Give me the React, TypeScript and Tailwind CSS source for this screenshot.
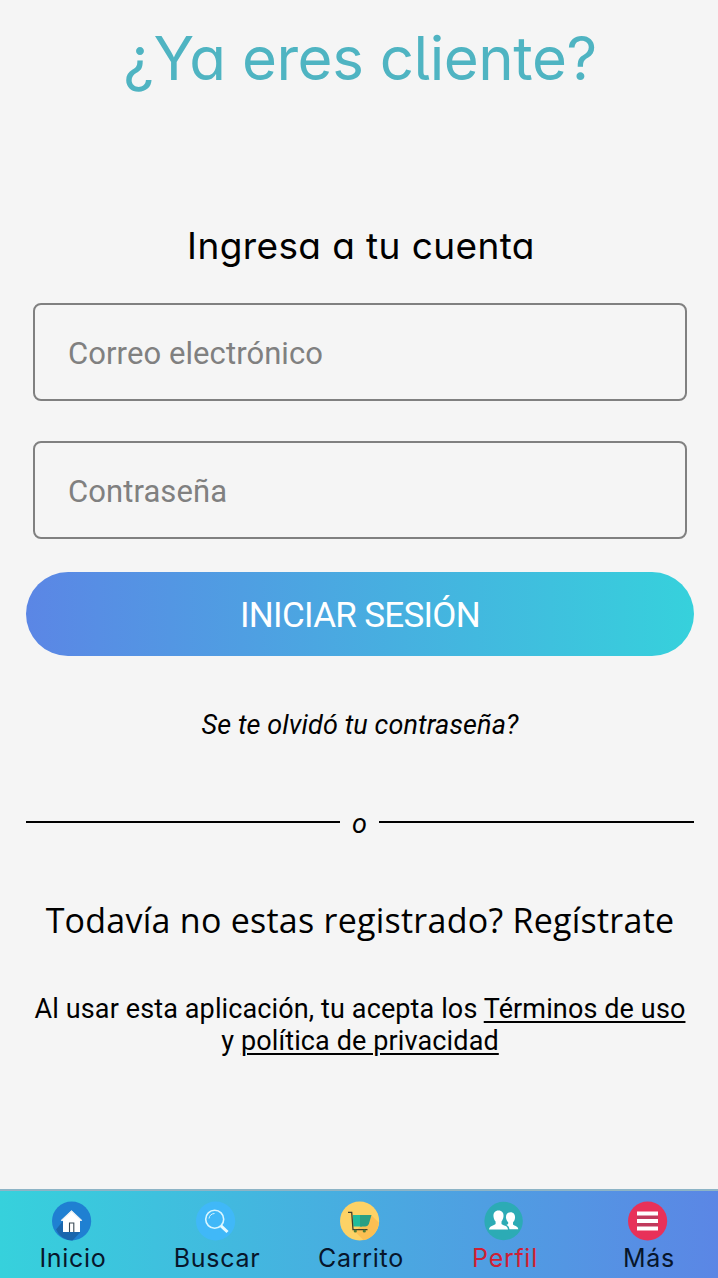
import React, { useState } from 'react';

function HomeIcon() {
  return (
    <svg viewBox="0 0 40 40" className="w-10 h-10">
      <circle cx="19.6" cy="20" r="19.6" fill="#1f80d2" />
      <path d="M10.5 20.5 L4 28.5 A18 18 0 0 0 20.5 39.4 L28.5 31 Z" fill="#1a66ad" />
      <path d="M19.5 9.5 L30 19.5 L28 20 V31 H11 V20 L9 19.5 Z" fill="#ffffff" />
      <path d="M17.5 31 V22 H21.8 V31" fill="none" stroke="#3b4a56" strokeWidth="1.1" />
      <path d="M9.2 19.6 L19.5 10 L29.8 19.6" fill="none" stroke="#e6edf2" strokeWidth="1.2" />
    </svg>
  );
}

function SearchIcon() {
  return (
    <svg viewBox="0 0 40 40" className="w-10 h-10">
      <circle cx="19.6" cy="20" r="19.6" fill="#40b8f8" />
      <circle cx="18.7" cy="18.2" r="9" fill="none" stroke="#d9f6ff" strokeWidth="1.6" />
      <path d="M13 17.5 A6 6 0 0 1 18.5 12.5" fill="none" stroke="#d9f6ff" strokeWidth="1" />
      <path d="M25 24.8 L31.5 31" stroke="#e8fbff" strokeWidth="3" />
    </svg>
  );
}

function CartIcon() {
  return (
    <svg viewBox="0 0 40 40" className="w-10 h-10">
      <circle cx="19.6" cy="20" r="19.6" fill="#fdd266" />
      <path d="M31 14 L38.8 21.5 A19.6 19.6 0 0 1 23.5 39.2 L15 30.5 Z" fill="#fcbf52" />
      <path d="M12.8 14 H22 V25.5 H13.3 Z" fill="#1fbc9c" />
      <path d="M20 14 H31.5 L29 22.5 Q28 25.5 25 25.5 H20 Z" fill="#2b9f83" />
      <path d="M8 11.3 H11.7 L13 28.7 H27.5" fill="none" stroke="#3d3d2c" strokeWidth="1.3" />
      <circle cx="15.3" cy="30" r="1.6" fill="#4e7a35" />
      <circle cx="24.3" cy="30" r="1.6" fill="#4e7a35" />
    </svg>
  );
}

function ProfileIcon() {
  return (
    <svg viewBox="0 0 40 40" className="w-10 h-10">
      <circle cx="19.6" cy="20" r="19.2" fill="#2cabb5" />
      <path
        d="M14.5 9.5 C18 9.5 19.9 12 19.5 15.5 C19.2 18 18.2 19.5 17.5 20.6 V23 C19 24.7 23.7 24.3 24 28.5 H5 C5.3 24.5 10 24.8 11.6 23 V20.6 C10.6 19.5 9.8 18 9.5 15.5 C9.2 12 11 9.5 14.5 9.5 Z"
        fill="#ffffff"
      />
      <path
        d="M26.5 11.3 C29.9 11.3 31.3 14 31 17 C30.8 19.2 29.8 20.4 29 21.4 V23.5 C30.5 25 34 24.8 34.3 28.3 H25.4 C25.2 25.6 23.7 24.6 22.3 23.8 C23.5 23.5 24 23 24.2 22.4 V21.2 C23.2 20.2 22.3 19 22 17 C21.7 14 23.1 11.3 26.5 11.3 Z"
        fill="#ffffff"
      />
    </svg>
  );
}

function MenuIcon() {
  return (
    <svg viewBox="0 0 40 40" className="w-10 h-10">
      <circle cx="19.6" cy="20" r="19.6" fill="#e83159" />
      <rect x="9" y="14" width="21" height="12" fill="#c03a5c" />
      <rect x="9" y="10.5" width="21" height="4" fill="#ffffff" />
      <rect x="9" y="18" width="21" height="4" fill="#ffffff" />
      <rect x="9" y="25.5" width="21" height="4" fill="#ffffff" />
    </svg>
  );
}

const tabs = [
  { label: 'Inicio', icon: HomeIcon },
  { label: 'Buscar', icon: SearchIcon },
  { label: 'Carrito', icon: CartIcon },
  { label: 'Perfil', icon: ProfileIcon },
  { label: 'Más', icon: MenuIcon },
];

export default function App() {
  const [email, setEmail] = useState('');
  const [password, setPassword] = useState('');
  const [active, setActive] = useState('Perfil');

  const inputClass =
    "block w-full h-[98px] px-[33px] pt-0.5 rounded-[8px] border-2 border-[#808080] bg-transparent font-['Roboto',sans-serif] text-[31px] tracking-[0.08px] text-[#222222] placeholder:text-[#808080] focus:outline-none";

  return (
    <div className="w-full h-[1278px] overflow-hidden bg-[#f5f5f5]">
      <div className="flex flex-col w-[720px] h-full text-black font-['Roboto',sans-serif]">
        <main className="flex-1 flex flex-col px-[26px] text-center">
          <h1 className="h-[116px] leading-[116px] whitespace-nowrap font-['Inter',sans-serif] [font-feature-settings:'cv11','cv05'] text-[60px] tracking-[-0.45px] text-[#4fb4c2]">
            ¿Ya eres cliente?
          </h1>
          <h2 className="mt-[106px] h-[48px] leading-[48px] pl-0.5 whitespace-nowrap font-['Inter',sans-serif] [font-feature-settings:'cv11'] text-[37px] tracking-[0.4px]">
            Ingresa a tu cuenta
          </h2>

          <form className="mt-[33px]" onSubmit={(e) => e.preventDefault()}>
            <div className="flex flex-col gap-10 px-[7px]">
              <input
                type="email"
                placeholder="Correo electrónico"
                value={email}
                onChange={(e) => setEmail(e.target.value)}
                className={inputClass}
              />
              <input
                type="password"
                placeholder="Contraseña"
                value={password}
                onChange={(e) => setPassword(e.target.value)}
                className={inputClass}
              />
            </div>
            <button
              type="submit"
              className="mt-[33px] block w-full h-[84px] pt-1 rounded-full bg-linear-to-r/srgb from-[#5b86e5] to-[#36d1dc] text-white text-[35px] tracking-[-0.7px]"
            >
              INICIAR SESIÓN
            </button>
          </form>

          <a href="#" className="mt-[50px] h-[38px] leading-[38px] italic text-[27px] tracking-[0.1px]">
            Se te olvidó tu contraseña?
          </a>

          {/* Divider */}
          <div className="mt-[60px] h-[36px] flex items-center">
            <div className="w-[314px] h-0.5 bg-black" />
            <span className="w-[39px] pt-1 italic text-[27px] leading-8">o</span>
            <div className="flex-1 h-0.5 bg-black" />
          </div>

          <p className="mt-[58px] h-[44px] leading-[44px] whitespace-nowrap font-['Open_Sans',sans-serif] text-[34px] tracking-[0.25px]">
            Todavía no estas registrado? Regístrate
          </p>

          <p className="mt-[51px] -mx-1 text-[27px] leading-8 tracking-[0.12px]">
            Al usar esta aplicación, tu acepta los{' '}
            <a href="#" className="underline decoration-2 underline-offset-3">Términos de uso</a>
            <br />y <a href="#" className="underline decoration-2 underline-offset-3">política de privacidad</a>
          </p>
        </main>

        {/* Bottom tabs */}
        <nav className="h-[89px] shrink-0 grid grid-cols-5 border-t-2 border-[#8db4c6] bg-linear-to-r/srgb from-[#36d1dc] to-[#5b86e5]">
          {tabs.map(({ label, icon: Icon }) => (
            <button
              key={label}
              onClick={() => setActive(label)}
              className={`flex flex-col items-center pt-[10px] font-['Inter',sans-serif] text-[25px] leading-[34px] tracking-[0.7px] ${
                active === label ? 'text-[#cf1f35]' : 'text-[#07162b]'
              }`}
            >
              <Icon />
              <span className="pl-0.5">{label}</span>
            </button>
          ))}
        </nav>
      </div>
    </div>
  );
}
